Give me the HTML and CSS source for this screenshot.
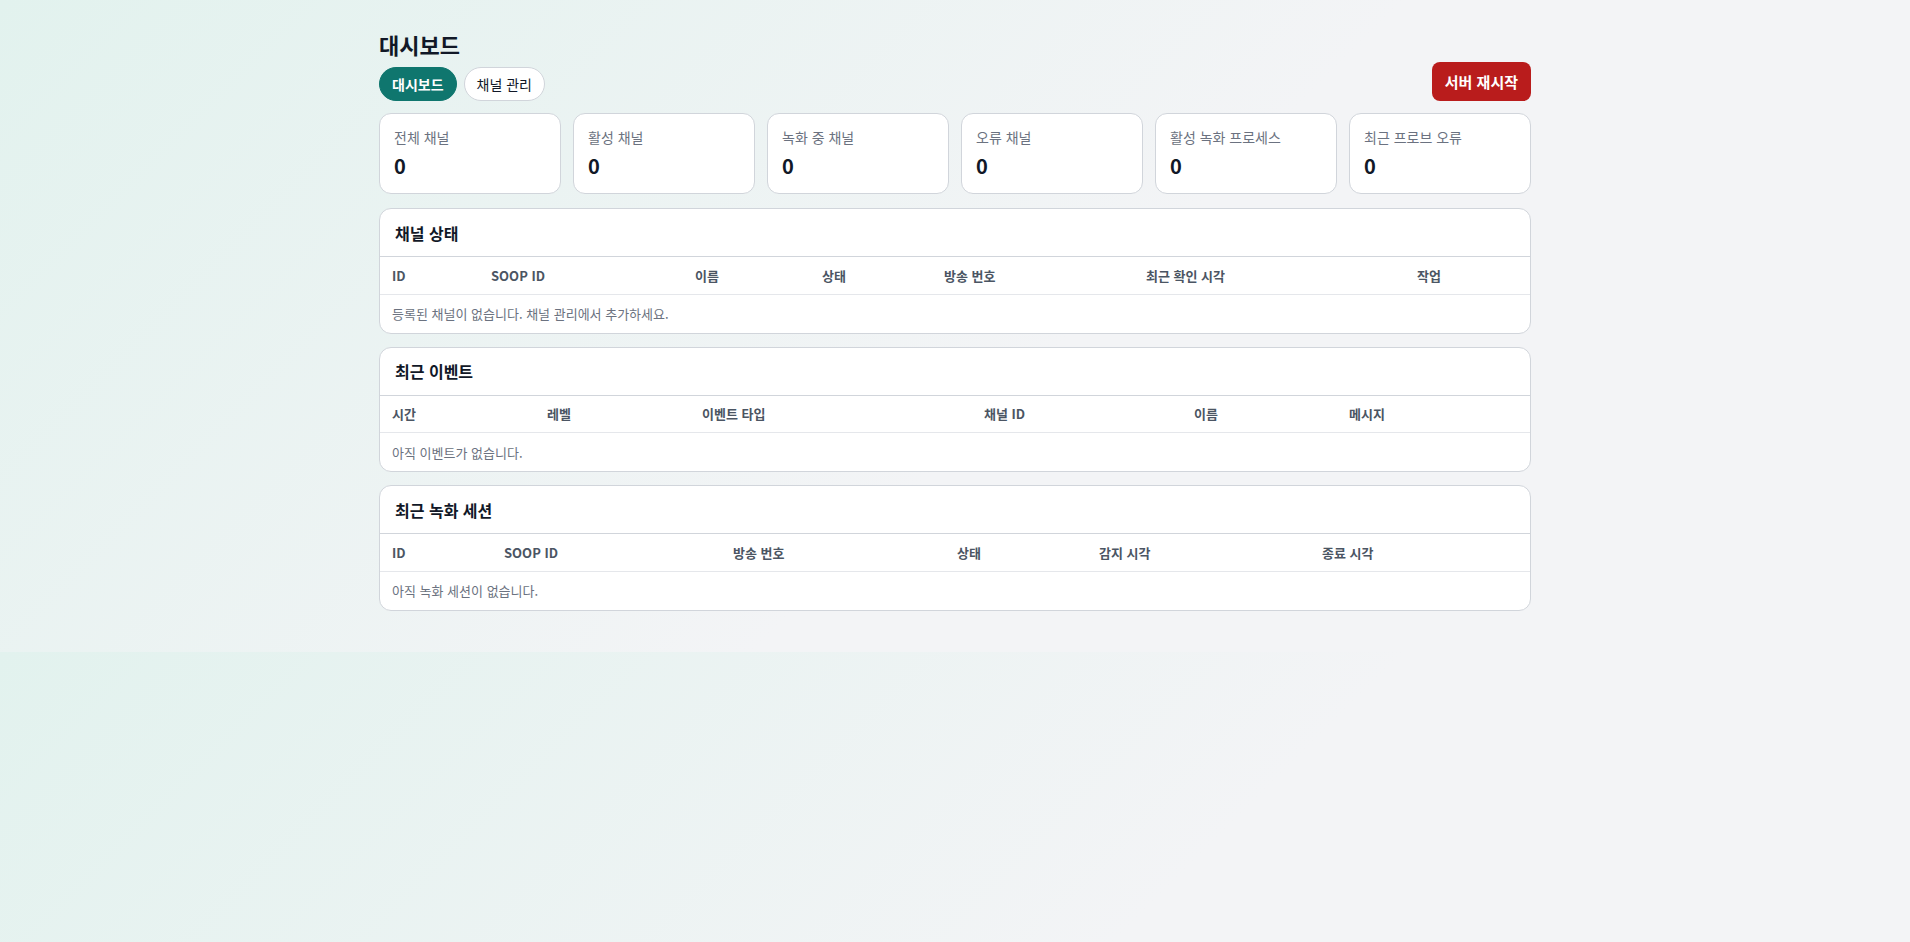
FILE: index.html
```html
<!DOCTYPE html>
<html lang="ko">

<head>
    <meta charset="UTF-8">
    <meta name="viewport" content="width=device-width, initial-scale=1.0">
    <title>대시보드</title>
    <link rel="stylesheet" href="styles.css">
</head>

<body>
    <div class="container">
        <!-- 상단 헤더 -->
        <header class="topbar">
            <div class="topbar-left">
                <h1>대시보드</h1>
                <nav class="tabs">
                    <a href="#" class="tab active">대시보드</a>
                    <a href="#" class="tab">채널 관리</a>
                </nav>
            </div>
            <button class="restart-btn">서버 재시작</button>
        </header>

        <!-- 요약 카드 -->
        <div class="stats">
            <div class="stat-card">
                <div class="stat-label">전체 채널</div>
                <div class="stat-value">0</div>
            </div>
            <div class="stat-card">
                <div class="stat-label">활성 채널</div>
                <div class="stat-value">0</div>
            </div>
            <div class="stat-card">
                <div class="stat-label">녹화 중 채널</div>
                <div class="stat-value">0</div>
            </div>
            <div class="stat-card">
                <div class="stat-label">오류 채널</div>
                <div class="stat-value">0</div>
            </div>
            <div class="stat-card">
                <div class="stat-label">활성 녹화 프로세스</div>
                <div class="stat-value">0</div>
            </div>
            <div class="stat-card">
                <div class="stat-label">최근 프로브 오류</div>
                <div class="stat-value">0</div>
            </div>
        </div>

        <!-- 채널 상태 -->
        <section class="panel">
            <h2 class="panel-title">채널 상태</h2>
            <table class="data-table channels-table">
                <thead>
                    <tr>
                        <th>ID</th>
                        <th>SOOP ID</th>
                        <th>이름</th>
                        <th>상태</th>
                        <th>방송 번호</th>
                        <th>최근 확인 시각</th>
                        <th>작업</th>
                    </tr>
                </thead>
                <tbody>
                    <tr>
                        <td colspan="7" class="empty">등록된 채널이 없습니다. 채널 관리에서 추가하세요.</td>
                    </tr>
                </tbody>
            </table>
        </section>

        <!-- 최근 이벤트 -->
        <section class="panel">
            <h2 class="panel-title">최근 이벤트</h2>
            <table class="data-table events-table">
                <thead>
                    <tr>
                        <th>시간</th>
                        <th>레벨</th>
                        <th>이벤트 타입</th>
                        <th>채널 ID</th>
                        <th>이름</th>
                        <th>메시지</th>
                    </tr>
                </thead>
                <tbody>
                    <tr>
                        <td colspan="6" class="empty">아직 이벤트가 없습니다.</td>
                    </tr>
                </tbody>
            </table>
        </section>

        <!-- 최근 녹화 세션 -->
        <section class="panel">
            <h2 class="panel-title">최근 녹화 세션</h2>
            <table class="data-table sessions-table">
                <thead>
                    <tr>
                        <th>ID</th>
                        <th>SOOP ID</th>
                        <th>방송 번호</th>
                        <th>상태</th>
                        <th>감지 시각</th>
                        <th>종료 시각</th>
                    </tr>
                </thead>
                <tbody>
                    <tr>
                        <td colspan="6" class="empty">아직 녹화 세션이 없습니다.</td>
                    </tr>
                </tbody>
            </table>
        </section>
    </div>
</body>

</html>
```

FILE: styles.css
```css
body {
    font-family: "Noto Sans CJK KR", "Noto Sans", sans-serif;
    background: linear-gradient(135deg, #e2f2ee 0%, #f3f4f6 55%);
    margin: 0;
    padding: 32px 24px 28px;
    color: #111827;
}

.container {
    max-width: 1152px;
    margin: 0 auto;
}

.topbar {
    display: flex;
    align-items: flex-end;
    justify-content: space-between;
    margin-bottom: 12px;
}

.topbar h1 {
    margin: 0 0 10px;
    font-size: 22px;
    line-height: 25px;
    font-weight: 700;
}

.tabs {
    display: flex;
    gap: 7px;
}

.tab {
    display: inline-flex;
    align-items: center;
    height: 34px;
    box-sizing: border-box;
    padding: 0 12px;
    border-radius: 999px;
    border: 1px solid #d1d5db;
    background-color: #fff;
    color: #111827;
    font-size: 14px;
    text-decoration: none;
}

.tab.active {
    background-color: #0f766e;
    border-color: #0f766e;
    color: #fff;
    font-weight: 700;
}

.restart-btn {
    background-color: #b91c1c;
    color: #fff;
    border: none;
    border-radius: 8px;
    height: 39px;
    padding: 0 13px;
    font-family: inherit;
    font-size: 15px;
    font-weight: 700;
    cursor: pointer;
}

.stats {
    display: grid;
    grid-template-columns: repeat(6, 1fr);
    gap: 12px;
    margin-bottom: 14px;
}

.stat-card {
    background-color: #fff;
    border: 1px solid #d1d5db;
    border-radius: 12px;
    padding: 13px 14px 13px;
}

.stat-label {
    font-size: 14px;
    line-height: 20px;
    color: #6b7280;
}

.stat-value {
    margin-top: 5px;
    font-size: 20px;
    line-height: 28px;
    font-weight: 700;
    color: #111827;
}

.panel {
    background-color: #fff;
    border: 1px solid #d1d5db;
    border-radius: 12px;
    overflow: hidden;
    margin-bottom: 13px;
}

.panel-title {
    margin: 0;
    height: 47px;
    padding: 0 15px;
    display: flex;
    align-items: center;
    font-size: 16px;
    font-weight: 700;
    border-bottom: 1px solid #d1d5db;
}

.data-table {
    width: 100%;
    border-collapse: collapse;
    table-layout: fixed;
}

.data-table th {
    box-sizing: border-box;
    height: 37px;
    padding: 0 12px;
    text-align: left;
    font-size: 13px;
    font-weight: 700;
    color: #4b5563;
    border-bottom: 1px solid #e5e7eb;
}

.data-table td {
    height: 38px;
    padding: 0 12px;
    font-size: 13px;
}

.data-table .empty {
    color: #6b7280;
}

/* 컬럼 폭 */
.channels-table th:nth-child(1) { width: 99px; }
.channels-table th:nth-child(2) { width: 204px; }
.channels-table th:nth-child(3) { width: 127px; }
.channels-table th:nth-child(4) { width: 122px; }
.channels-table th:nth-child(5) { width: 202px; }
.channels-table th:nth-child(6) { width: 271px; }

.events-table th:nth-child(1) { width: 155px; }
.events-table th:nth-child(2) { width: 155px; }
.events-table th:nth-child(3) { width: 282px; }
.events-table th:nth-child(4) { width: 210px; }
.events-table th:nth-child(5) { width: 155px; }

.sessions-table th:nth-child(1) { width: 112px; }
.sessions-table th:nth-child(2) { width: 229px; }
.sessions-table th:nth-child(3) { width: 224px; }
.sessions-table th:nth-child(4) { width: 142px; }
.sessions-table th:nth-child(5) { width: 223px; }
```
